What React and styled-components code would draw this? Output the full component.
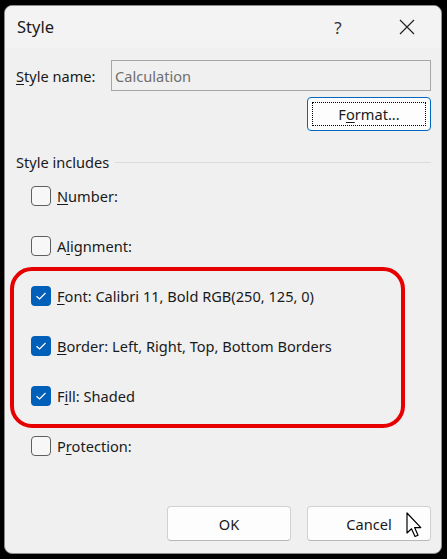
import styled, { createGlobalStyle } from "styled-components"

const Global = createGlobalStyle`
  html, body { margin: 0; padding: 0; background: #000; }
  body { font-family: "Noto Sans", "Open Sans", sans-serif; }
`;

const Frame = styled.div`
  width: 447px;
  height: 559px;
  box-sizing: border-box;
  padding: 5px 5px 5px 4px;
  background: #000;
`;

const Dialog = styled.div`
  position: relative;
  width: 438px;
  height: 549px;
  box-sizing: border-box;
  border: 1px solid #8c8c8c;
  border-radius: 8px;
  background: #f0f0f0;
  overflow: hidden;
  display: flex;
  flex-direction: column;
  color: #1a1a1a;
`;

const TitleBar = styled.div`
  height: 42px;
  flex: none;
  display: flex;
  align-items: center;
  background: #f3f3f3;
  padding-left: 12px;
`;

const Title = styled.div`
  flex: 1;
  font-size: 16.5px;
  padding-bottom: 1px;
`;

const TitleIcon = styled.div`
  width: ${p => p.w}px;
  height: 42px;
  display: flex;
  align-items: center;
  justify-content: center;
  font-size: 17px;
  color: #333;
`;

const Body = styled.div`
  flex: 1;
  display: flex;
  flex-direction: column;
  padding: 12px 10px 0 11px;
`;

const NameRow = styled.div`
  display: flex;
  align-items: center;
`;

const Label = styled.div`
  width: 95px;
  font-size: 14.6px;
`;

const Key = styled.span`
  text-decoration: underline;
  text-underline-offset: 2px;
`;

const NameInput = styled.div`
  flex: 1;
  height: 31px;
  box-sizing: border-box;
  border: 1px solid #a6a6a6;
  background: #f0f0f0;
  color: #6e6e6e;
  font-size: 14.6px;
  display: flex;
  align-items: center;
  padding-left: 3px;
`;

const FormatRow = styled.div`
  display: flex;
  justify-content: flex-end;
  margin-top: 6px;
`;

const Button = styled.div`
  width: 124px;
  height: ${p => p.h || 35}px;
  box-sizing: border-box;
  background: #fdfdfd;
  border: ${p => (p.primary ? "1.5px solid #0067c0" : "1px solid #d0d0d0")};
  border-bottom-color: ${p => (p.primary ? "#0067c0" : "#b8b8b8")};
  border-radius: 4px;
  padding: 4px;
  font-size: 14.6px;
  display: flex;
`;

const ButtonInner = styled.div`
  flex: 1;
  display: flex;
  align-items: center;
  justify-content: center;
  border: ${p => (p.focus ? "1px dotted #000" : "1px solid transparent")};
`;

const Section = styled.div`
  display: flex;
  align-items: center;
  gap: 6px;
  margin-top: 21px;
  font-size: 14.6px;
`;

const Rule = styled.div`
  flex: 1;
  height: 1px;
  background: #dcdcdc;
`;

const List = styled.div`
  display: flex;
  flex-direction: column;
  margin-top: -1px;
`;

const Row = styled.div`
  height: 50px;
  display: flex;
  align-items: center;
  padding-left: 15px;
  gap: 6px;
  font-size: 14.6px;
`;

const Box = styled.div`
  width: 20px;
  height: 20px;
  box-sizing: border-box;
  border-radius: 4px;
  border: ${p => (p.checked ? "none" : "1px solid #5f5f5f")};
  background: ${p => (p.checked ? "#005fb8" : "#f7f7f7")};
  display: flex;
  align-items: center;
  justify-content: center;
`;

const Highlight = styled.div`
  display: flex;
  flex-direction: column;
  margin: -4px 26px -7px -6px;
  padding-bottom: 3px;
  border: 4px solid #e60000;
  border-radius: 22px;

  & > div {
    padding-left: 17px;
  }
`;

const Footer = styled.div`
  margin-top: auto;
  display: flex;
  justify-content: flex-end;
  gap: 16px;
  padding-bottom: 12px;
`;

const Cursor = styled.svg`
  position: absolute;
  left: 401px;
  top: 506px;
`;

function Check() {
  return (
    <svg width="12" height="10" viewBox="0 0 12 10">
      <path d="M1.5 5.2 L4.6 8 L10.5 2" fill="none" stroke="#fff" strokeWidth="1.2" />
    </svg>
  );
}

function Item({ checked, pre, k, post }) {
  return (
    <Row>
      <Box checked={checked}>{checked && <Check />}</Box>
      <span>
        {pre}
        <Key>{k}</Key>
        {post}
      </span>
    </Row>
  );
}

export default function App() {
  return (
    <Frame>
      <Global />
      <Dialog>
        <TitleBar>
          <Title>Style</Title>
          <TitleIcon w={90}>?</TitleIcon>
          <TitleIcon w={48}>
            <svg width="16" height="16" viewBox="0 0 16 16">
              <path d="M1 1 L15 15 M15 1 L1 15" stroke="#222" strokeWidth="1.2" />
            </svg>
          </TitleIcon>
          <div style={{ width: 10 }} />
        </TitleBar>
        <Body>
          <NameRow>
            <Label>
              <Key>S</Key>tyle name:
            </Label>
            <NameInput>Calculation</NameInput>
          </NameRow>
          <FormatRow>
            <Button primary h={34}>
              <ButtonInner focus>
                F<Key>o</Key>rmat...
              </ButtonInner>
            </Button>
          </FormatRow>
          <Section>
            Style includes
            <Rule />
          </Section>
          <List>
            <Item pre="" k="N" post="umber:" />
            <Item pre="A" k="l" post="ignment:" />
            <Highlight>
              <Item checked pre="" k="F" post="ont: Calibri 11, Bold RGB(250, 125, 0)" />
              <Item checked pre="" k="B" post="order: Left, Right, Top, Bottom Borders" />
              <Item checked pre="F" k="i" post="ll: Shaded" />
            </Highlight>
            <Item pre="P" k="r" post="otection:" />
          </List>
          <Footer>
            <Button>
              <ButtonInner>OK</ButtonInner>
            </Button>
            <Button>
              <ButtonInner>Cancel</ButtonInner>
            </Button>
          </Footer>
        </Body>
        <Cursor width="20" height="28" viewBox="0 0 20 28">
          <path
            d="M1 1 L1 21 L5.5 16.8 L9 24.5 L12 23.2 L8.6 15.6 L14.8 15.6 Z"
            fill="#fff"
            stroke="#000"
            strokeWidth="1.2"
            strokeLinejoin="round"
          />
        </Cursor>
      </Dialog>
    </Frame>
  );
}
